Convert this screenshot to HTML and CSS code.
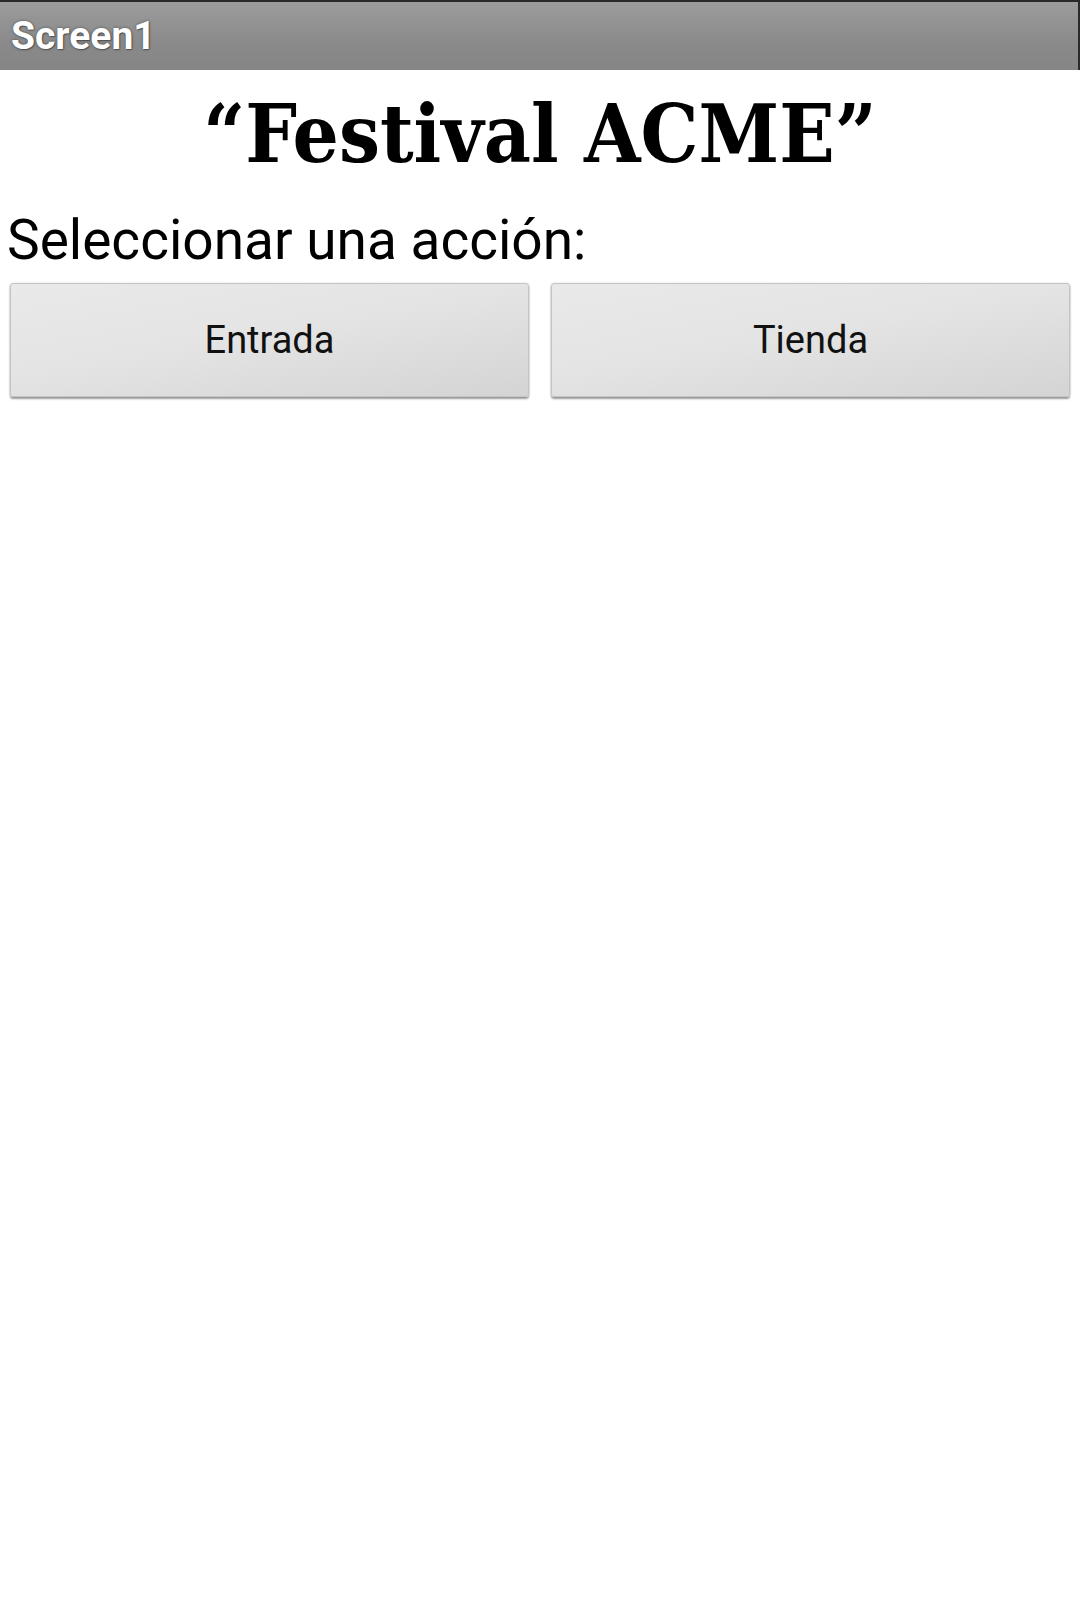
FILE: index.html
```html
<!DOCTYPE html>
<html lang="es">
<head>
<meta charset="utf-8">
<title>Screen1</title>
<link rel="stylesheet" href="styles.css">
</head>
<body>
<header class="titlebar"><span class="titlebar-text">Screen1</span></header>
<main class="screen">
  <h1 class="headline">“Festival ACME”</h1>
  <p class="prompt">Seleccionar una acción:</p>
  <div class="actions">
    <button class="action-btn" type="button">Entrada</button>
    <button class="action-btn" type="button">Tienda</button>
  </div>
</main>
</body>
</html>
```
FILE: styles.css
```css
html, body {
  margin: 0;
  padding: 0;
  background: #ffffff;
}
body {
  width: 1080px;
  height: 1601px;
  font-family: Roboto, "Liberation Sans", sans-serif;
  color: #000;
}
.titlebar {
  box-sizing: border-box;
  height: 70px;
  border-top: 2px solid #2a2a2a;
  border-right: 2px solid #2a2a2a;
  background: linear-gradient(to bottom, #9c9c9c 0%, #8a8a8a 60%, #858585 100%);
  display: flex;
  align-items: center;
  padding-left: 11px;
}
.titlebar-text {
  font-family: Roboto, "Liberation Sans", sans-serif;
  font-weight: 700;
  font-size: 39px;
  color: #ffffff;
  text-shadow: 0 0 3px rgba(0,0,0,0.45), 1px 1px 1px rgba(0,0,0,0.3);
}
.screen {
  display: flex;
  flex-direction: column;
}
.headline {
  margin: 0;
  padding-top: 4px;
  text-align: center;
  font-family: "DejaVu Serif", "Liberation Serif", serif;
  font-stretch: condensed;
  font-weight: 700;
  font-size: 81px;
  line-height: 120px;
  height: 120px;
}
.prompt {
  margin: 0;
  padding: 8px 0 0 7px;
  font-size: 55px;
  line-height: 76px;
  height: 76px;
}
.actions {
  display: grid;
  grid-template-columns: 1fr 1fr;
  gap: 22px;
  padding: 5px 10px 0 10px;
}
.action-btn {
  height: 114px;
  border: 1px solid #c4c4c4;
  border-radius: 3px;
  background: linear-gradient(170deg, #e9e9e9 0%, #e4e4e4 45%, #d4d4d4 100%);
  box-shadow: 0 2px 2px rgba(0,0,0,0.38), 0 0 2px rgba(0,0,0,0.15);
  font-family: Roboto, "Liberation Sans", sans-serif;
  font-size: 38px;
  color: #111;
  padding: 0;
}
```
